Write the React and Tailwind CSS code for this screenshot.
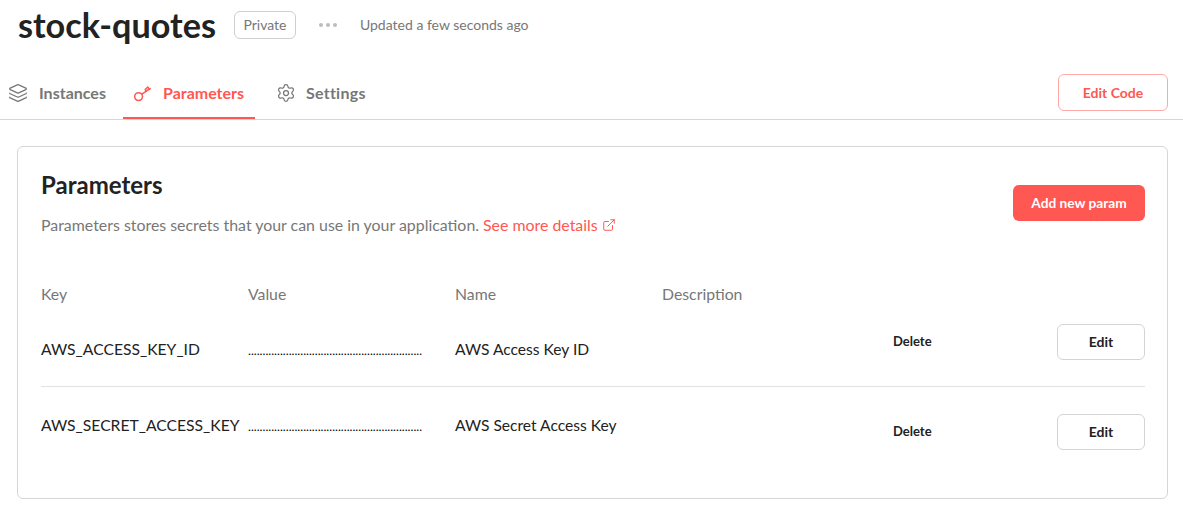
import { Layers, Settings, ExternalLink } from "lucide-react";

const params = [
  { key: "AWS_ACCESS_KEY_ID", name: "AWS Access Key ID", textClass: "mt-[15px]", border: true },
  { key: "AWS_SECRET_ACCESS_KEY", name: "AWS Secret Access Key", textClass: "mt-px", border: false },
];

function KeyIcon() {
  return (
    <svg width="18" height="18" viewBox="0 0 18 18" fill="none" stroke="currentColor" strokeWidth="1.5" strokeLinecap="round" strokeLinejoin="round">
      <circle cx="4.6" cy="12.6" r="3.9" />
      <path d="M7.8 10.2 16.2 4.6" />
      <path d="M12.2 7.4 11.2 5.6 13.8 3 15.2 5.2" />
    </svg>
  );
}

function ParamRow({ item }) {
  return (
    <div className={`flex items-start ${item.border ? "pb-[25px] border-b border-[#e2e2e2]" : "pt-[27px]"}`}>
      <div className={`w-[207px] text-[15.7px] leading-5 text-[#222] ${item.textClass}`}>{item.key}</div>
      <div className={`w-[207px] text-[15.6px] leading-5 text-black ${item.textClass}`}>
        <span className="text-[12.3px]">{".".repeat(60)}</span>
      </div>
      <div className={`w-[438px] text-[15.6px] leading-5 text-[#222] ${item.textClass}`}>{item.name}</div>
      <button className="mt-[9px] text-[13px] leading-4 font-bold text-[#222]">Delete</button>
      <button className="ml-auto w-[88px] h-9 rounded-md border border-[#d4d4d4] text-sm font-bold text-[#222]">Edit</button>
    </div>
  );
}

export default function App() {
  return (
    <div className="min-h-[513px] bg-white font-['Lato','Liberation_Sans',sans-serif] text-[#222]">
      {/* title */}
      <div className="flex items-center h-[50px] pl-[18px]">
        <h1 className="text-[34.2px] leading-9 font-bold">stock-quotes</h1>
        <span className="ml-[18px] flex items-center justify-center w-[62px] h-7 rounded-md border border-[#cfcfcf] text-sm text-[#777]">Private</span>
        <div className="ml-[23px] flex gap-[3px]">
          <span className="w-[4px] h-[4px] rounded-full bg-[#bdbdbd]" />
          <span className="w-[4px] h-[4px] rounded-full bg-[#bdbdbd]" />
          <span className="w-[4px] h-[4px] rounded-full bg-[#bdbdbd]" />
        </div>
        <span className="ml-[23px] text-sm text-[#777]">Updated a few seconds ago</span>
      </div>

      {/* tabs */}
      <div className="flex items-end justify-between h-[70px] pl-2 pr-[15px] border-b border-[#d6d6d6]">
        <div className="flex text-base font-bold text-[#777]">
          <div className="flex items-center gap-[11px] h-[47px] w-[115px] pb-[6px]">
            <Layers size={20} strokeWidth={1.5} />
            <span>Instances</span>
          </div>
          <div className="flex items-center gap-[11px] h-[47px] w-[132px] pl-[11px] pb-[4px] -mb-px border-b-2 border-[#ff5751] text-[#ff5751]">
            <KeyIcon />
            <span>Parameters</span>
          </div>
          <div className="flex items-center gap-[10px] h-[47px] pl-[21px] pb-[6px]">
            <Settings size={20} strokeWidth={1.5} />
            <span className="tracking-[0.25px]">Settings</span>
          </div>
        </div>
        <button className="mb-2 w-[110px] h-[37px] rounded-md border border-[#ffa9a6] text-sm font-bold text-[#ff5751]">Edit Code</button>
      </div>

      {/* card */}
      <div className="mt-[26px] mr-[15px] ml-[17px] h-[353px] rounded-md border border-[#d6d6d6] pt-[26px] pl-[23px] pr-[22px]">
        <div className="flex justify-between items-start">
          <div>
            <h2 className="text-2xl leading-6 font-bold">Parameters</h2>
            <p className="mt-[18px] flex items-center text-[15.9px] leading-5 text-[#777]">
              Parameters stores secrets that your can use in your application.
              <a className="ml-1 flex items-center gap-1 text-[#ff5751]">
                See more details
                <ExternalLink size={14} strokeWidth={1.7} />
              </a>
            </p>
          </div>
          <button className="mt-3 w-[132px] h-9 rounded-md bg-[#ff5751] text-[13.7px] font-bold text-white">Add new param</button>
        </div>

        <div className="mt-[49px] flex text-[15.8px] leading-5 text-[#777]">
          <div className="w-[207px]">Key</div>
          <div className="w-[207px]">Value</div>
          <div className="w-[207px]">Name</div>
          <div>Description</div>
        </div>

        <div className="mt-5">
          {params.map((item) => (
            <ParamRow key={item.key} item={item} />
          ))}
        </div>
      </div>
    </div>
  );
}
